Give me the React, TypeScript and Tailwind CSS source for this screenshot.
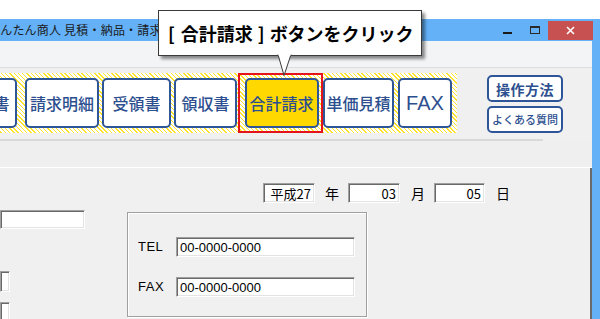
import React from 'react';

// ツールバーのボタン（ハッチ背景の上）
const TOOL_BUTTON =
  "flex items-center justify-center h-[50px] shrink-0 rounded-[5px] border-2 border-[#2d5597] bg-white text-[#2d4f8f] font-['Noto_Sans_CJK_JP',sans-serif] text-[16px] font-medium leading-none";

// くぼみのある入力欄（Windows クラシック）
const SUNKEN =
  "bg-white border border-t-[#a0a0a0] border-l-[#a0a0a0] border-r-white border-b-white shadow-[inset_1px_1px_0_#696969,inset_-1px_-1px_0_#e3e3e3]";

function ToolButton({ label, width, className = '' }: { label: string; width: string; className?: string }) {
  return <div className={`${TOOL_BUTTON} ${width} ${className}`}>{label}</div>;
}

function DateBox({ value, width }: { value: string; width: string }) {
  return (
    <div
      className={`${SUNKEN} ${width} h-[20px] flex items-center justify-end pr-[3px] text-[13px] text-black font-['Noto_Sans_CJK_JP',sans-serif] leading-none`}
    >
      {value}
    </div>
  );
}

function TelRow({ label, value, className = '' }: { label: string; value: string; className?: string }) {
  return (
    <div className={`flex items-center h-[20px] ${className}`}>
      <span className="ml-[10px] w-[38px] text-[13px] text-black font-['Liberation_Sans',sans-serif] tracking-[0.5px]">
        {label}
      </span>
      <div
        className={`${SUNKEN} w-[179px] h-[20px] flex items-center pl-[3px] text-[13px] text-black font-['Liberation_Sans',sans-serif] leading-none`}
      >
        {value}
      </div>
    </div>
  );
}

export default function App() {
  return (
    <div className="relative w-[600px] h-[319px] overflow-hidden bg-white font-['Noto_Sans_CJK_JP',sans-serif]">
      <div className="mt-[19px] h-[300px] flex flex-col">
        {/* タイトルバー */}
        <div className="h-[22px] shrink-0 flex items-center bg-[#64b1f8]">
          <span className="-ml-[12px] text-[12px] tracking-[0.2px] text-[#1b1b1b] whitespace-nowrap leading-none">
            かんたん商人 見積・納品・請求書作成
          </span>
          <div className="ml-auto flex items-center h-full">
            <div className="w-[9px] h-[2px] mt-[5px] bg-[#1b1b1b]" />
            <div className="ml-[18px] w-[10px] h-[8px] border border-t-2 border-[#2a2a2a]" />
            <div className="ml-[8px] w-[45px] h-[19px] mt-[1px] flex items-center justify-center bg-[#c75050]">
              <svg width="9" height="9" viewBox="0 0 9 9">
                <path d="M1 1L8 8M8 1L1 8" stroke="#fff" strokeWidth="1.6" />
              </svg>
            </div>
            <div className="w-[7px]" />
          </div>
        </div>

        <div className="flex-1 flex min-h-0">
          <div className="flex-1 flex flex-col bg-[#f0f0f0]">
            <div className="h-[27px] shrink-0 bg-[#f3f4f6] border-b border-[#dcdde0]" />

            {/* ツールバー */}
            <div className="h-[71px] shrink-0 flex items-start pt-[5px]">
              <div className="-ml-[50px] h-[60px] flex items-center pl-[4px] pr-[5px] bg-[repeating-linear-gradient(45deg,#ffe32a_0_1px,#ffffff_1px_3px)]">
                <ToolButton label="納品書" width="w-[63px]" />
                <ToolButton label="請求明細" width="w-[74px]" className="ml-[8px]" />
                <ToolButton label="受領書" width="w-[69px]" className="ml-[3px]" />
                <ToolButton label="領収書" width="w-[63px]" className="ml-[3px]" />
                <div className="ml-[1px] w-[85px] h-[60px] shrink-0 border-2 border-[#e5141c] flex items-center justify-center pl-[2px]">
                  <div className={`${TOOL_BUTTON} w-[74px] !bg-[#ffd800]`}>合計請求</div>
                </div>
                <ToolButton label="単価見積" width="w-[71px]" />
                <div className="ml-[4px] w-[54px] h-[50px] shrink-0 flex items-center justify-center rounded-[5px] border-2 border-[#2d5597] bg-white text-[#2d4f8f] font-['Liberation_Sans',sans-serif] text-[20px] leading-none">
                  FAX
                </div>
              </div>
              <div className="ml-[30px] mt-[2px] flex flex-col gap-[4px]">
                <div className="w-[76px] h-[27px] flex items-center justify-center rounded-[5px] border-2 border-[#2d5597] bg-white text-[#2d4f8f] text-[14px] font-bold leading-none tracking-[0.5px]">
                  操作方法
                </div>
                <div className="w-[76px] h-[27px] flex items-center justify-center rounded-[5px] border-2 border-[#2d5597] bg-white text-[#2d4f8f] text-[11px] font-medium leading-none">
                  よくある質問
                </div>
              </div>
            </div>

            <div className="w-[543px] h-[2px] shrink-0 bg-[#d9d9d9]" />
            <div className="h-[26px] shrink-0 bg-[#efefef]" />
            <div className="h-[1px] shrink-0 bg-white" />

            {/* 入力フォーム */}
            <div className="flex-1 border-r-2 border-[#6b6b6b] overflow-hidden">
              <div className="ml-[263px] mt-[15px] flex items-center h-[20px] text-[14px] text-black">
                <DateBox value="平成27" width="w-[52px]" />
                <span className="ml-[10px]">年</span>
                <div className="ml-[9px]">
                  <DateBox value="03" width="w-[52px]" />
                </div>
                <span className="ml-[11px]">月</span>
                <div className="ml-[9px]">
                  <DateBox value="05" width="w-[51px]" />
                </div>
                <span className="ml-[11px]">日</span>
              </div>

              <div className="mt-[7px] flex items-start">
                <div className="w-[85px] flex flex-col">
                  <div className={`${SUNKEN} w-[85px] h-[19px]`} />
                  <div className={`${SUNKEN} w-[10px] h-[21px] mt-[42px]`} />
                  <div className={`${SUNKEN} w-[10px] h-[21px] mt-[10px]`} />
                </div>
                <div className="ml-[42px] mt-[2px] w-[240px] h-[105px] border border-[#a0a0a0] shadow-[inset_1px_1px_0_#ffffff,1px_1px_0_#ffffff] pt-[24px]">
                  <TelRow label="TEL" value="00-0000-0000" />
                  <TelRow label="FAX" value="00-0000-0000" className="mt-[20px]" />
                </div>
              </div>
            </div>
          </div>
          <div className="w-[8px] bg-[#64b1f8]" />
        </div>
      </div>

      {/* 吹き出し */}
      <div className="absolute left-[158px] top-[10px] w-[264px] h-[46px] bg-white border border-[#3a3a3a] shadow-[3px_3px_3px_rgba(0,0,0,0.45)] flex items-center pl-[9px] text-[18px] font-bold text-black whitespace-nowrap leading-none">
        <span>[</span>
        <span className="ml-[6px]">合計請求</span>
        <span className="ml-[5px]">]</span>
        <span className="ml-[5px]">ボタンをクリック</span>
      </div>
      <svg className="absolute left-[276px] top-[54px]" width="18" height="24" viewBox="0 0 18 24">
        <path d="M2 0.5 L8 21.5 L15 0.5" fill="#ffffff" stroke="#3a3a3a" strokeWidth="1" />
        <rect x="2.6" y="0" width="11.8" height="2" fill="#ffffff" />
      </svg>
    </div>
  );
}
